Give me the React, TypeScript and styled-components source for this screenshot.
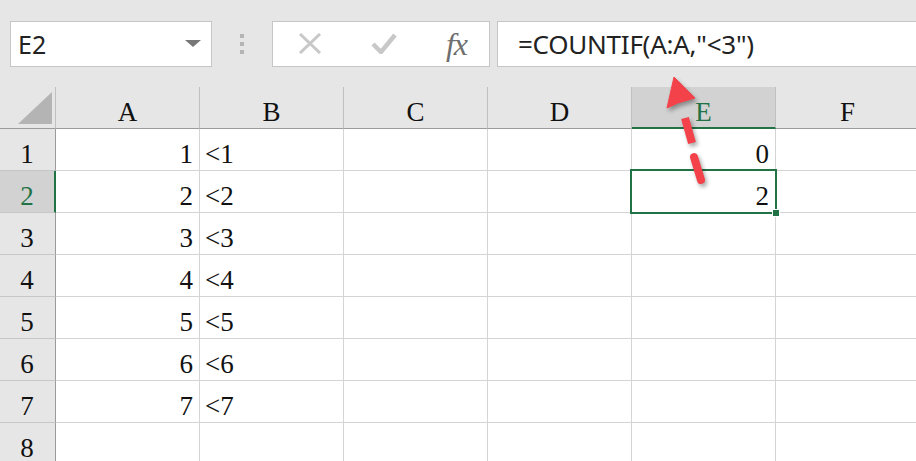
import styled, { createGlobalStyle } from 'styled-components';

const GlobalStyle = createGlobalStyle`
  html, body {
    margin: 0;
    padding: 0;
    background: #e6e6e6;
    overflow: hidden;
  }
`;

const GREEN = '#217346';
const GRID = '#d4d4d4';

const columns = ['A', 'B', 'C', 'D', 'E', 'F'];
const rows = [1, 2, 3, 4, 5, 6, 7, 8];

type cellValue = { text: string; align: 'left' | 'right' };
const data: Record<string, cellValue> = {
  A1: { text: '1', align: 'right' },
  A2: { text: '2', align: 'right' },
  A3: { text: '3', align: 'right' },
  A4: { text: '4', align: 'right' },
  A5: { text: '5', align: 'right' },
  A6: { text: '6', align: 'right' },
  A7: { text: '7', align: 'right' },
  B1: { text: '<1', align: 'left' },
  B2: { text: '<2', align: 'left' },
  B3: { text: '<3', align: 'left' },
  B4: { text: '<4', align: 'left' },
  B5: { text: '<5', align: 'left' },
  B6: { text: '<6', align: 'left' },
  B7: { text: '<7', align: 'left' },
  E1: { text: '0', align: 'right' },
  E2: { text: '2', align: 'right' },
};

const activeCol = 'E';
const activeRow = 2;

export default function App() {
  return (
    <>
      <GlobalStyle />
      <Page>
        <FormulaBar>
          <NameBox>
            <span>E2</span>
            <DropArrow />
          </NameBox>
          <Grip>
            <i />
            <i />
            <i />
          </Grip>
          <FuncBox>
            <svg width='24' height='21' viewBox='0 0 24 21'>
              <path d='M2 1 L22 20 M22 1 L2 20' stroke='#c8c8c8' strokeWidth='3' fill='none' />
            </svg>
            <svg width='26' height='21' viewBox='0 0 26 21'>
              <path d='M2 11 L10 19 L24 2' stroke='#c8c8c8' strokeWidth='4.5' fill='none' />
            </svg>
            <Fx>fx</Fx>
          </FuncBox>
          <FormulaInput>=COUNTIF(A:A,"&lt;3")</FormulaInput>
        </FormulaBar>

        <Sheet>
          <Corner>
            <svg width='36' height='34' viewBox='0 0 36 34'>
              <polygon points='35,1 35,33 1,33' fill='#b4b4b4' />
            </svg>
          </Corner>
          {columns.map((c) => (
            <ColHeader key={c} $active={c === activeCol}>
              {c}
            </ColHeader>
          ))}
          {rows.map((r) => (
            <Row key={r} r={r} />
          ))}
        </Sheet>

        <Annotation width='916' height='461' viewBox='0 0 916 461'>
          <g fill='#f4424a' stroke='#f4424a'>
            <polygon points='674,77 667,108 678,103 695,98' strokeWidth='1' strokeLinejoin='round' />
            <line x1='685' y1='118' x2='692' y2='143' strokeWidth='8' />
            <line x1='694' y1='157' x2='701' y2='180' strokeWidth='8' strokeLinecap='round' />
          </g>
        </Annotation>
      </Page>
    </>
  );
}

function Row({ r }: { r: number }) {
  return (
    <>
      <RowHeader $active={r === activeRow}>{r}</RowHeader>
      {columns.map((c) => {
        const key = `${c}${r}`;
        const v = data[key];
        const selected = c === activeCol && r === activeRow;
        return (
          <Cell key={key} $align={v ? v.align : 'left'} $selected={selected}>
            {v ? v.text : ''}
          </Cell>
        );
      })}
    </>
  );
}

const Page = styled.div`
  position: relative;
  width: 916px;
  height: 461px;
  overflow: hidden;
  background: #e6e6e6;
`;

const FormulaBar = styled.div`
  display: flex;
  align-items: center;
  height: 87px;
  padding: 0 0 0 10px;
  box-sizing: border-box;
`;

const Box = styled.div`
  height: 46px;
  box-sizing: border-box;
  background: #ffffff;
  border: 1px solid #c6c6c6;
  display: flex;
  align-items: center;
`;

const NameBox = styled(Box)`
  width: 202px;
  padding: 0 10px 0 7px;
  justify-content: space-between;
  font-family: 'Noto Sans', 'Liberation Sans', sans-serif;
  font-size: 25px;
  color: #222222;
`;

const DropArrow = styled.div`
  width: 0;
  height: 0;
  border-left: 8px solid transparent;
  border-right: 8px solid transparent;
  border-top: 7px solid #777777;
`;

const Grip = styled.div`
  width: 60px;
  display: flex;
  flex-direction: column;
  align-items: center;
  gap: 4px;
  i {
    display: block;
    width: 4px;
    height: 4px;
    background: #b4b4b4;
  }
`;

const FuncBox = styled(Box)`
  width: 218px;
  padding: 0 22px 0 25px;
  justify-content: space-between;
`;

const Fx = styled.span`
  font-family: 'Liberation Serif', serif;
  font-style: italic;
  font-size: 32px;
  color: #6e6e6e;
  letter-spacing: -1px;
  margin-top: 2px;
`;

const FormulaInput = styled(Box)`
  flex: 1;
  margin-left: 7px;
  margin-right: -4px;
  padding-left: 20px;
  font-family: 'Noto Sans', 'Liberation Sans', sans-serif;
  font-size: 26px;
  letter-spacing: -0.25px;
  color: #222222;
`;

const Sheet = styled.div`
  display: grid;
  grid-template-columns: 56px repeat(6, 144px);
  grid-template-rows: 42px;
  grid-auto-rows: 42px;
  font-family: 'Liberation Serif', serif;
`;

const Corner = styled.div`
  box-sizing: border-box;
  border-right: 1px solid #c0c0c0;
  border-bottom: 1px solid #9b9b9b;
  display: flex;
  align-items: flex-end;
  justify-content: flex-end;
  padding: 0 2px 3px 0;
`;

const ColHeader = styled.div<{ $active?: boolean }>`
  box-sizing: border-box;
  background: ${(p) => (p.$active ? '#d2d2d2' : '#e6e6e6')};
  border-right: 1px solid #c0c0c0;
  border-bottom: ${(p) => (p.$active ? `2px solid ${GREEN}` : '1px solid #9b9b9b')};
  color: ${(p) => (p.$active ? GREEN : '#111111')};
  font-size: 27px;
  line-height: 30px;
  display: flex;
  align-items: flex-end;
  justify-content: center;
  padding-bottom: ${(p) => (p.$active ? '0' : '1px')};
`;

const RowHeader = styled.div<{ $active?: boolean }>`
  box-sizing: border-box;
  background: ${(p) => (p.$active ? '#d2d2d2' : '#e6e6e6')};
  border-right: ${(p) => (p.$active ? `2px solid ${GREEN}` : '1px solid #9b9b9b')};
  border-bottom: 1px solid #c6c6c6;
  color: ${(p) => (p.$active ? GREEN : '#111111')};
  font-size: 27px;
  line-height: 30px;
  display: flex;
  align-items: flex-end;
  justify-content: center;
  padding: 0 ${(p) => (p.$active ? '0' : '1px')} 1px 0;
`;

const Cell = styled.div<{ $align: 'left' | 'right'; $selected?: boolean }>`
  position: relative;
  box-sizing: border-box;
  background: #ffffff;
  border-right: 1px solid ${GRID};
  border-bottom: 1px solid ${GRID};
  color: #111111;
  font-size: 27px;
  line-height: 30px;
  display: flex;
  align-items: flex-end;
  justify-content: ${(p) => (p.$align === 'right' ? 'flex-end' : 'flex-start')};
  padding: 0 6px 1px 5px;
  ${(p) =>
    p.$selected &&
    `
    z-index: 2;
    &::before {
      content: '';
      position: absolute;
      left: -2px;
      top: -2px;
      right: -2px;
      bottom: -2px;
      border: 2px solid ${GREEN};
      pointer-events: none;
    }
    &::after {
      content: '';
      position: absolute;
      right: -5px;
      bottom: -5px;
      width: 6px;
      height: 6px;
      background: ${GREEN};
      border: 1px solid #ffffff;
    }
  `}
`;

const Annotation = styled.svg`
  position: absolute;
  left: 0;
  top: 0;
  z-index: 5;
  pointer-events: none;
  filter: drop-shadow(2px 3px 2px rgba(0, 0, 0, 0.35));
`;
